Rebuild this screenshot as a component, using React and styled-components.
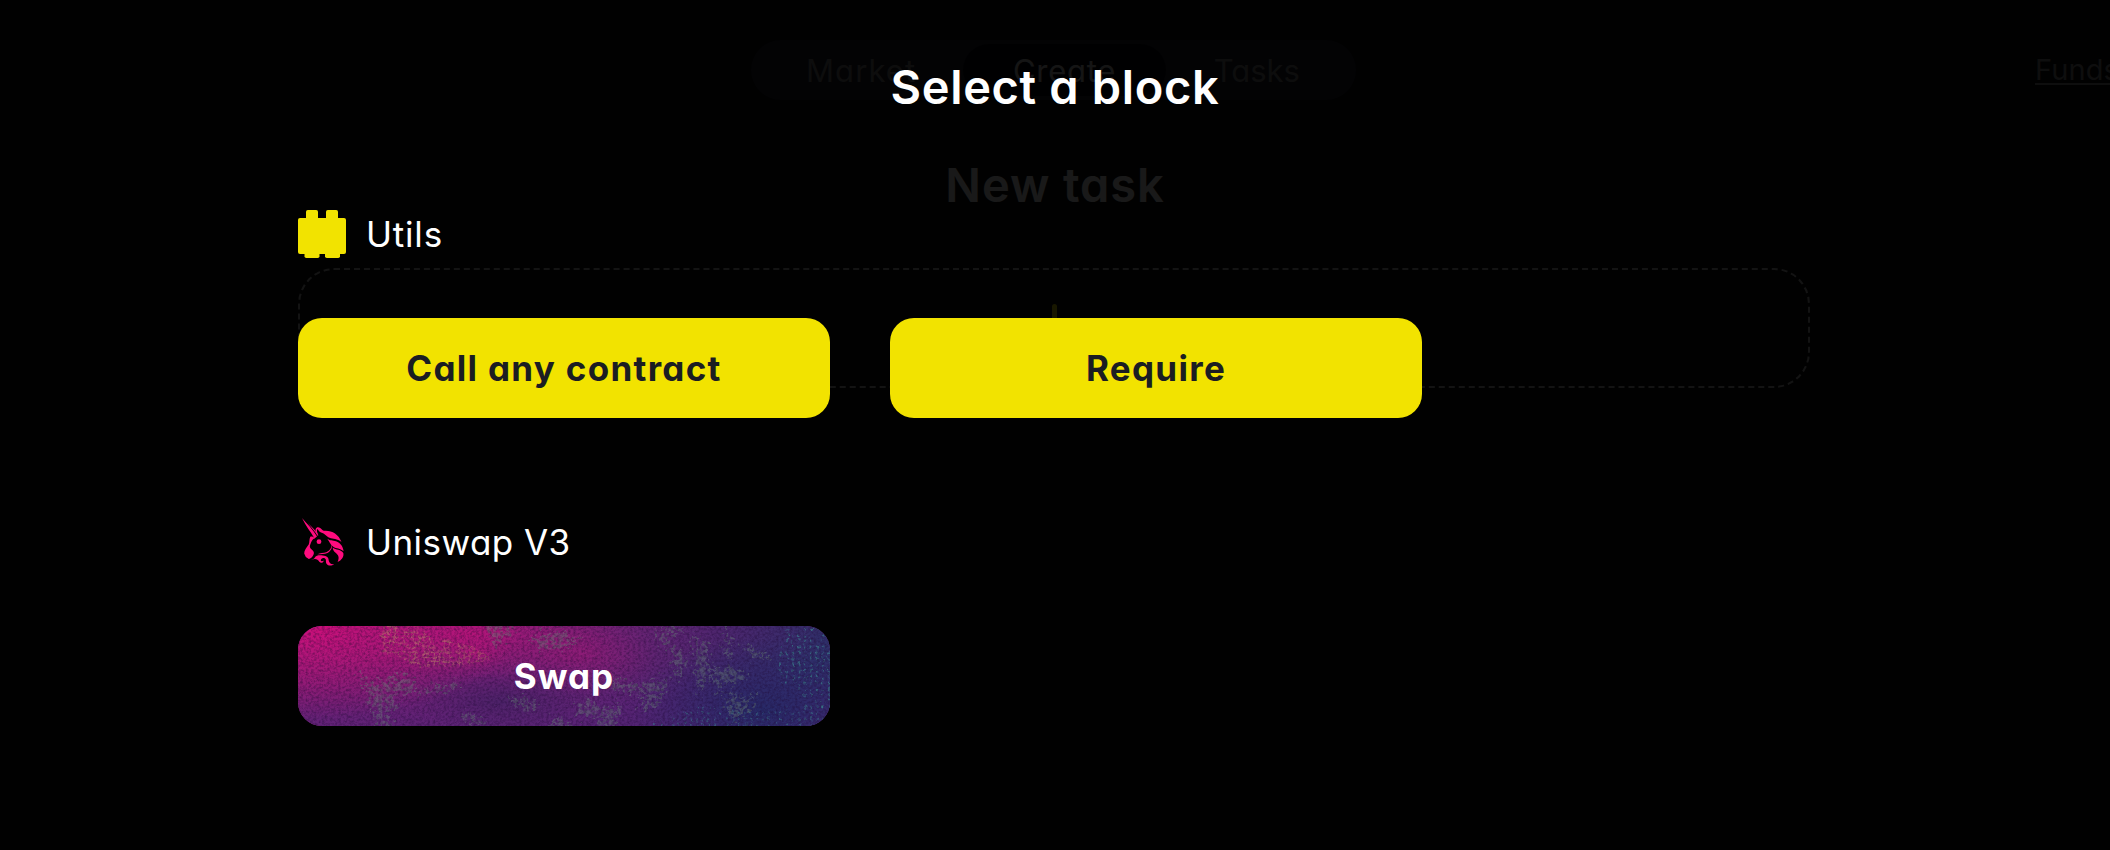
import React from "react";
import styled, { createGlobalStyle } from "styled-components";

const GlobalStyle = createGlobalStyle`
  * { box-sizing: border-box; }
  html, body { margin: 0; background: #0d0d0d; overflow: hidden; }
  body {
    font-family: Inter, "Liberation Sans", sans-serif;
    font-feature-settings: "cv11" 1;
    color: #fff;
  }
  h1, h2, h3 { margin: 0; }
`;

const Page = styled.div`
  position: relative;
  width: 100%;
  height: 850px;
  overflow: hidden;
  background: #0d0d0d;
`;

const Header = styled.header`
  display: grid;
  grid-template-columns: 751px 605px 1fr;
  padding-top: 40px;
`;

const Nav = styled.nav`
  grid-column: 2;
  display: flex;
  align-items: center;
  height: 60px;
  padding: 4px 8px;
  border-radius: 30px;
  background: #20202f;
`;

const NavItem = styled.a`
  width: ${(p) => p.$width}px;
  height: 52px;
  border-radius: 26px;
  font-size: 31px;
  line-height: 53px;
  letter-spacing: ${(p) => p.$spacing}px;
  text-align: center;
  white-space: nowrap;
  color: ${(p) => (p.$active ? "#d6d6d6" : "#848484")};
  background: ${(p) => (p.$active ? "#08080f" : "transparent")};
`;

const Funds = styled.a`
  margin-left: 679px;
  font-size: 29px;
  line-height: 60px;
  letter-spacing: 0.1px;
  color: #8c8c8c;
  white-space: nowrap;
  text-decoration: underline;
  text-decoration-thickness: 2px;
  text-underline-offset: 3px;
`;

const PageTitle = styled.h1`
  margin-top: 55px;
  font-size: 47px;
  font-weight: 600;
  line-height: 60px;
  letter-spacing: 0.9px;
  text-align: center;
`;

const DropZone = styled.div`
  display: flex;
  justify-content: center;
  align-items: center;
  width: 1512px;
  height: 120px;
  margin: 53px auto 0 298px;
  border: 2px dashed #c4c4c4;
  border-radius: 36px;
`;

const Overlay = styled.div`
  position: absolute;
  inset: 0;
  background: rgba(0, 0, 0, 0.9);
`;

const Modal = styled.section`
  display: flex;
  flex-direction: column;
  padding: 57px 298px 0;
`;

const ModalTitle = styled.h2`
  font-size: 47px;
  font-weight: 600;
  line-height: 60px;
  letter-spacing: 0.65px;
  text-align: center;
`;

const Group = styled.section`
  margin-top: ${(p) => p.$gap}px;
`;

const GroupHeader = styled.header`
  display: flex;
  align-items: center;
  gap: 20px;
  height: 48px;
`;

const GroupName = styled.h3`
  font-size: 35px;
  font-weight: 400;
  line-height: 48px;
  letter-spacing: ${(p) => p.$spacing}px;
  white-space: nowrap;
`;

const BlockGrid = styled.div`
  display: grid;
  grid-template-columns: 532px 532px;
  gap: 60px;
  margin-top: 60px;
`;

const Block = styled.button`
  position: relative;
  height: 100px;
  padding: 0;
  border: 0;
  border-radius: 24px;
  overflow: hidden;
  font-family: inherit;
  font-feature-settings: inherit;
  font-size: 35px;
  font-weight: 700;
  line-height: 100px;
  letter-spacing: ${(p) => (p.$textured ? 1 : 1.3)}px;
  color: ${(p) => (p.$textured ? "#fff" : "#1b1d22")};
  background: ${(p) => (p.$textured ? "#5a1f6c" : "#f2e300")};
`;

const BlockLabel = styled.span`
  position: relative;
`;

const Texture = styled.svg`
  position: absolute;
  inset: 0;
`;

const PlusIcon = () => (
  <svg width="48" height="48" viewBox="0 0 48 48" fill="none" stroke="#f2e300" strokeWidth="5" strokeLinecap="round">
    <path d="M24.5 2.5V45.5M3 24H46" />
  </svg>
);

const BrickIcon = () => (
  <svg width="48" height="48" viewBox="0 0 48 48" fill="#f2e300">
    <rect x="8" y="0" width="12" height="12" rx="1.8" />
    <rect x="28" y="0" width="12" height="12" rx="1.8" />
    <rect x="0" y="8" width="48" height="36" rx="2" />
    <rect x="6.5" y="38" width="15" height="10" rx="1.8" />
    <rect x="27" y="38" width="15" height="10" rx="1.8" />
  </svg>
);

const UnicornIcon = () => (
  <svg width="48" height="48" viewBox="0 0 48 48" fill="#ff0b7e">
    <path d="M4 0C9 6 15.500 12 19 18.400L16.500 20.500C12.800 14 7.500 7.500 4 0Z" />
    <path d="M9.700 5C14 9 18 12.800 20.500 17.200L19.500 17.800C16.800 13.500 13.500 9.500 9.700 5Z" />
    <path d="M17.600 11.200C18.500 9.200 20.200 8.800 22.200 10.100C23.600 11 24.200 12.200 25.800 12.800C33 12 40.500 15.600 43.500 24C39 20.500 35 21.300 31.500 19.800C28.200 18.400 26.900 15.400 23 14.500C20.800 13.900 20.500 11.500 19.200 10.900C18.600 12.700 19.100 14.500 20.200 16L18.700 15.400C17.700 14.200 17.200 12.800 17.600 11.200Z" />
    <path d="M12.300 18.700C13.800 18.200 15.600 18.900 17 20.300C13.500 21.600 13 25 12 27.600C11.200 30.500 13.900 31.200 15.500 33.500C16.800 35.600 14.700 39.800 10.800 41.100L7.800 38.900L6.200 35.600C6.100 32.200 8.500 29.500 10.700 26.400C11.700 24.500 11 21.500 12.300 18.700Z" />
    <circle cx="21" cy="23.700" r="2.400" />
    <path d="M28.500 20C31.500 22.800 33.500 22 37 23C41.500 24.200 45 27.500 45.600 33.300C41.800 30 38.500 30.800 35.300 28.700C31.800 26.300 31.300 22.700 28.500 20Z" />
    <path d="M34.700 29.500C38.200 32.300 43 31.200 45.300 35C46.300 38.600 43.500 42.300 39.600 44C42 39 39.800 36.700 37.300 34.600C35.700 33 34.800 31.500 34.700 29.500Z" />
    <path d="M33.300 25.800C34.300 29.400 31.800 32.600 28.300 34.200C25.500 35.300 22 34.700 19.300 36.300C22.800 36 26.500 36.500 29.500 35C33 33 35 29.300 33.300 25.800Z" />
    <path d="M16.700 39.700C18 36.900 22 37.300 24.800 37.500C29 37.800 30.800 40 30.700 42.500C31.300 45.200 33.400 46.600 36 46C33.700 48.400 30 48 28.500 45.700C27.200 43.700 28.800 41.500 26.900 40.400C25.100 39.300 22.600 40.600 22.800 42.500C23 43.500 24.500 43.700 25.500 42.600C26 44.600 22.800 45.900 21.300 43.800C19.600 41.500 18 40.300 14 41.600L13 41.400C14.900 41.200 16 41 16.700 39.700Z" />
  </svg>
);

const meshPatch = "M83 0H122L130 10L175 20L196 34L150 42L118 40L104 32L84 28Z";

const wornPatches = [
  "M188 0H214L210 8L198 18Z",
  "M236 14L262 6L276 14L268 20L246 22Z",
  "M63 48L68 62L84 58L96 52L112 54L114 62L86 70L98 78L88 86L92 100H82L76 84Z",
  "M364 0H386L372 10L362 16Z",
  "M374 24L388 34L380 48Z",
  "M398 14L409 22L411 46L402 64L399 44Z",
  "M416 46L434 42L446 48L438 56L426 56L420 66Z",
  "M443 18L458 24L468 32L452 28Z",
  "M312 56L346 60L370 54L364 64L358 80L346 80L350 68L320 64Z",
  "M280 80L290 76L304 86L320 82L318 100H306L302 90L284 90Z",
  "M216 74L236 76L230 84Z",
  "M256 92L274 100H254Z",
  "M429 78L438 68L446 76L454 72L448 84L438 90Z",
  "M164 86L188 96L174 96Z",
  "M428 0L432 28L429 30Z",
  "M120 66L160 58L150 62Z",
];

const GrungeTexture = () => (
  <Texture width="532" height="100" viewBox="0 0 532 100">
    <defs>
      <linearGradient id="base" x1="0" y1="0" x2="1" y2="0.1">
        <stop offset="0" stopColor="#8c1e77" />
        <stop offset="0.35" stopColor="#7a2076" />
        <stop offset="0.62" stopColor="#6a2374" />
        <stop offset="0.8" stopColor="#4c266e" />
        <stop offset="1" stopColor="#2f2f69" />
      </linearGradient>
      <linearGradient id="depth" x1="0" y1="0" x2="0" y2="1">
        <stop offset="0.35" stopColor="#502375" stopOpacity="0" />
        <stop offset="1" stopColor="#502375" stopOpacity="0.700" />
      </linearGradient>
      <radialGradient id="pink">
        <stop offset="0" stopColor="#d60d7b" />
        <stop offset="0.4" stopColor="#be1379" stopOpacity="0.72" />
        <stop offset="1" stopColor="#a0156f" stopOpacity="0" />
      </radialGradient>
      <radialGradient id="violet">
        <stop offset="0" stopColor="#4c2268" />
        <stop offset="1" stopColor="#4c2268" stopOpacity="0" />
      </radialGradient>
      <radialGradient id="navy">
        <stop offset="0" stopColor="#272966" />
        <stop offset="1" stopColor="#272966" stopOpacity="0" />
      </radialGradient>
      <pattern id="mesh" width="5" height="5" patternUnits="userSpaceOnUse">
        <path d="M0 1.200H5M1.200 0V5" stroke="#b88a68" strokeWidth="1.400" />
      </pattern>
      <pattern id="dots" width="6" height="6" patternUnits="userSpaceOnUse">
        <ellipse cx="3" cy="3" rx="1.200" ry="1.700" fill="#3a7e8c" />
      </pattern>
      <filter id="grain" x="0" y="0" width="100%" height="100%" colorInterpolationFilters="sRGB">
        <feTurbulence type="fractalNoise" baseFrequency="0.37 0.41" numOctaves="3" seed="4" />
        <feColorMatrix values="0 0 0 0 0.12  0 0 0 0 0.03  0 0 0 0 0.2  2.200 0 0 0 -0.850" />
      </filter>
      <filter id="worn" x="-5%" y="-5%" width="110%" height="110%" colorInterpolationFilters="sRGB">
        <feTurbulence type="fractalNoise" baseFrequency="0.2" numOctaves="3" seed="9" result="n" />
        <feDisplacementMap in="SourceGraphic" in2="n" scale="22" xChannelSelector="R" yChannelSelector="G" result="d" />
        <feTurbulence type="fractalNoise" baseFrequency="0.26" numOctaves="2" seed="21" result="m" />
        <feColorMatrix in="m" values="0 0 0 0 1  0 0 0 0 1  0 0 0 0 1  0 5 0 0 -1.850" result="holes" />
        <feComposite in="d" in2="holes" operator="in" />
      </filter>
      <filter id="rough" colorInterpolationFilters="sRGB">
        <feTurbulence type="fractalNoise" baseFrequency="0.15" numOctaves="3" seed="2" result="n" />
        <feDisplacementMap in="SourceGraphic" in2="n" scale="7" xChannelSelector="R" yChannelSelector="G" result="d" />
        <feColorMatrix in="n" values="0 0 0 0 1  0 0 0 0 1  0 0 0 0 1  0 0 5 0 -1.900" result="holes" />
        <feComposite in="d" in2="holes" operator="in" />
      </filter>
    </defs>
    <rect width="532" height="100" fill="url(#base)" />
    <rect width="532" height="100" fill="url(#depth)" />
    <ellipse cx="205" cy="76" rx="90" ry="30" fill="url(#violet)" />
    <ellipse cx="465" cy="85" rx="130" ry="75" fill="url(#navy)" />
    <ellipse cx="15" cy="-8" rx="215" ry="100" fill="url(#pink)" />
    <ellipse cx="175" cy="8" rx="150" ry="46" fill="url(#pink)" opacity="0.550" />
    <ellipse cx="285" cy="30" rx="75" ry="40" fill="url(#pink)" opacity="0.260" />
    <path d={meshPatch} fill="url(#mesh)" opacity="0.500" filter="url(#rough)" />
    <ellipse cx="178" cy="26" rx="34" ry="18" fill="url(#pink)" opacity="0.250" />
    <g filter="url(#worn)" opacity="0.420">
      {wornPatches.map((d) => (
        <path key={d} d={d} fill="#668076" stroke="#668076" strokeWidth="4" />
      ))}
    </g>
    <path d="M484 4L532 0V85L512 76L498 60H478L482 30Z" fill="url(#dots)" opacity="0.700" filter="url(#rough)" />
    <path d="M370 90L400 80L480 84L532 74V100H350Z" fill="url(#dots)" opacity="0.500" filter="url(#rough)" />
    <rect width="532" height="100" filter="url(#grain)" opacity="0.420" />
  </Texture>
);

export default function App() {
  return (
    <>
      <GlobalStyle />
      <Page>
        <Header>
          <Nav>
            <NavItem $width={205} $spacing={1.1}>Market</NavItem>
            <NavItem $width={203} $spacing={0.7} $active>Create</NavItem>
            <NavItem $width={183} $spacing={0}>Tasks</NavItem>
          </Nav>
          <Funds>Funds</Funds>
        </Header>
        <PageTitle>New task</PageTitle>
        <DropZone>
          <PlusIcon />
        </DropZone>
        <Overlay>
          <Modal>
            <ModalTitle>Select a block</ModalTitle>
            <Group $gap={93}>
              <GroupHeader>
                <BrickIcon />
                <GroupName $spacing={0.8}>Utils</GroupName>
              </GroupHeader>
              <BlockGrid>
                <Block>
                  <BlockLabel>Call any contract</BlockLabel>
                </Block>
                <Block>
                  <BlockLabel>Require</BlockLabel>
                </Block>
              </BlockGrid>
            </Group>
            <Group $gap={100}>
              <GroupHeader>
                <UnicornIcon />
                <GroupName $spacing={0.45}>Uniswap V3</GroupName>
              </GroupHeader>
              <BlockGrid>
                <Block $textured>
                  <GrungeTexture />
                  <BlockLabel>Swap</BlockLabel>
                </Block>
              </BlockGrid>
            </Group>
          </Modal>
        </Overlay>
      </Page>
    </>
  );
}
